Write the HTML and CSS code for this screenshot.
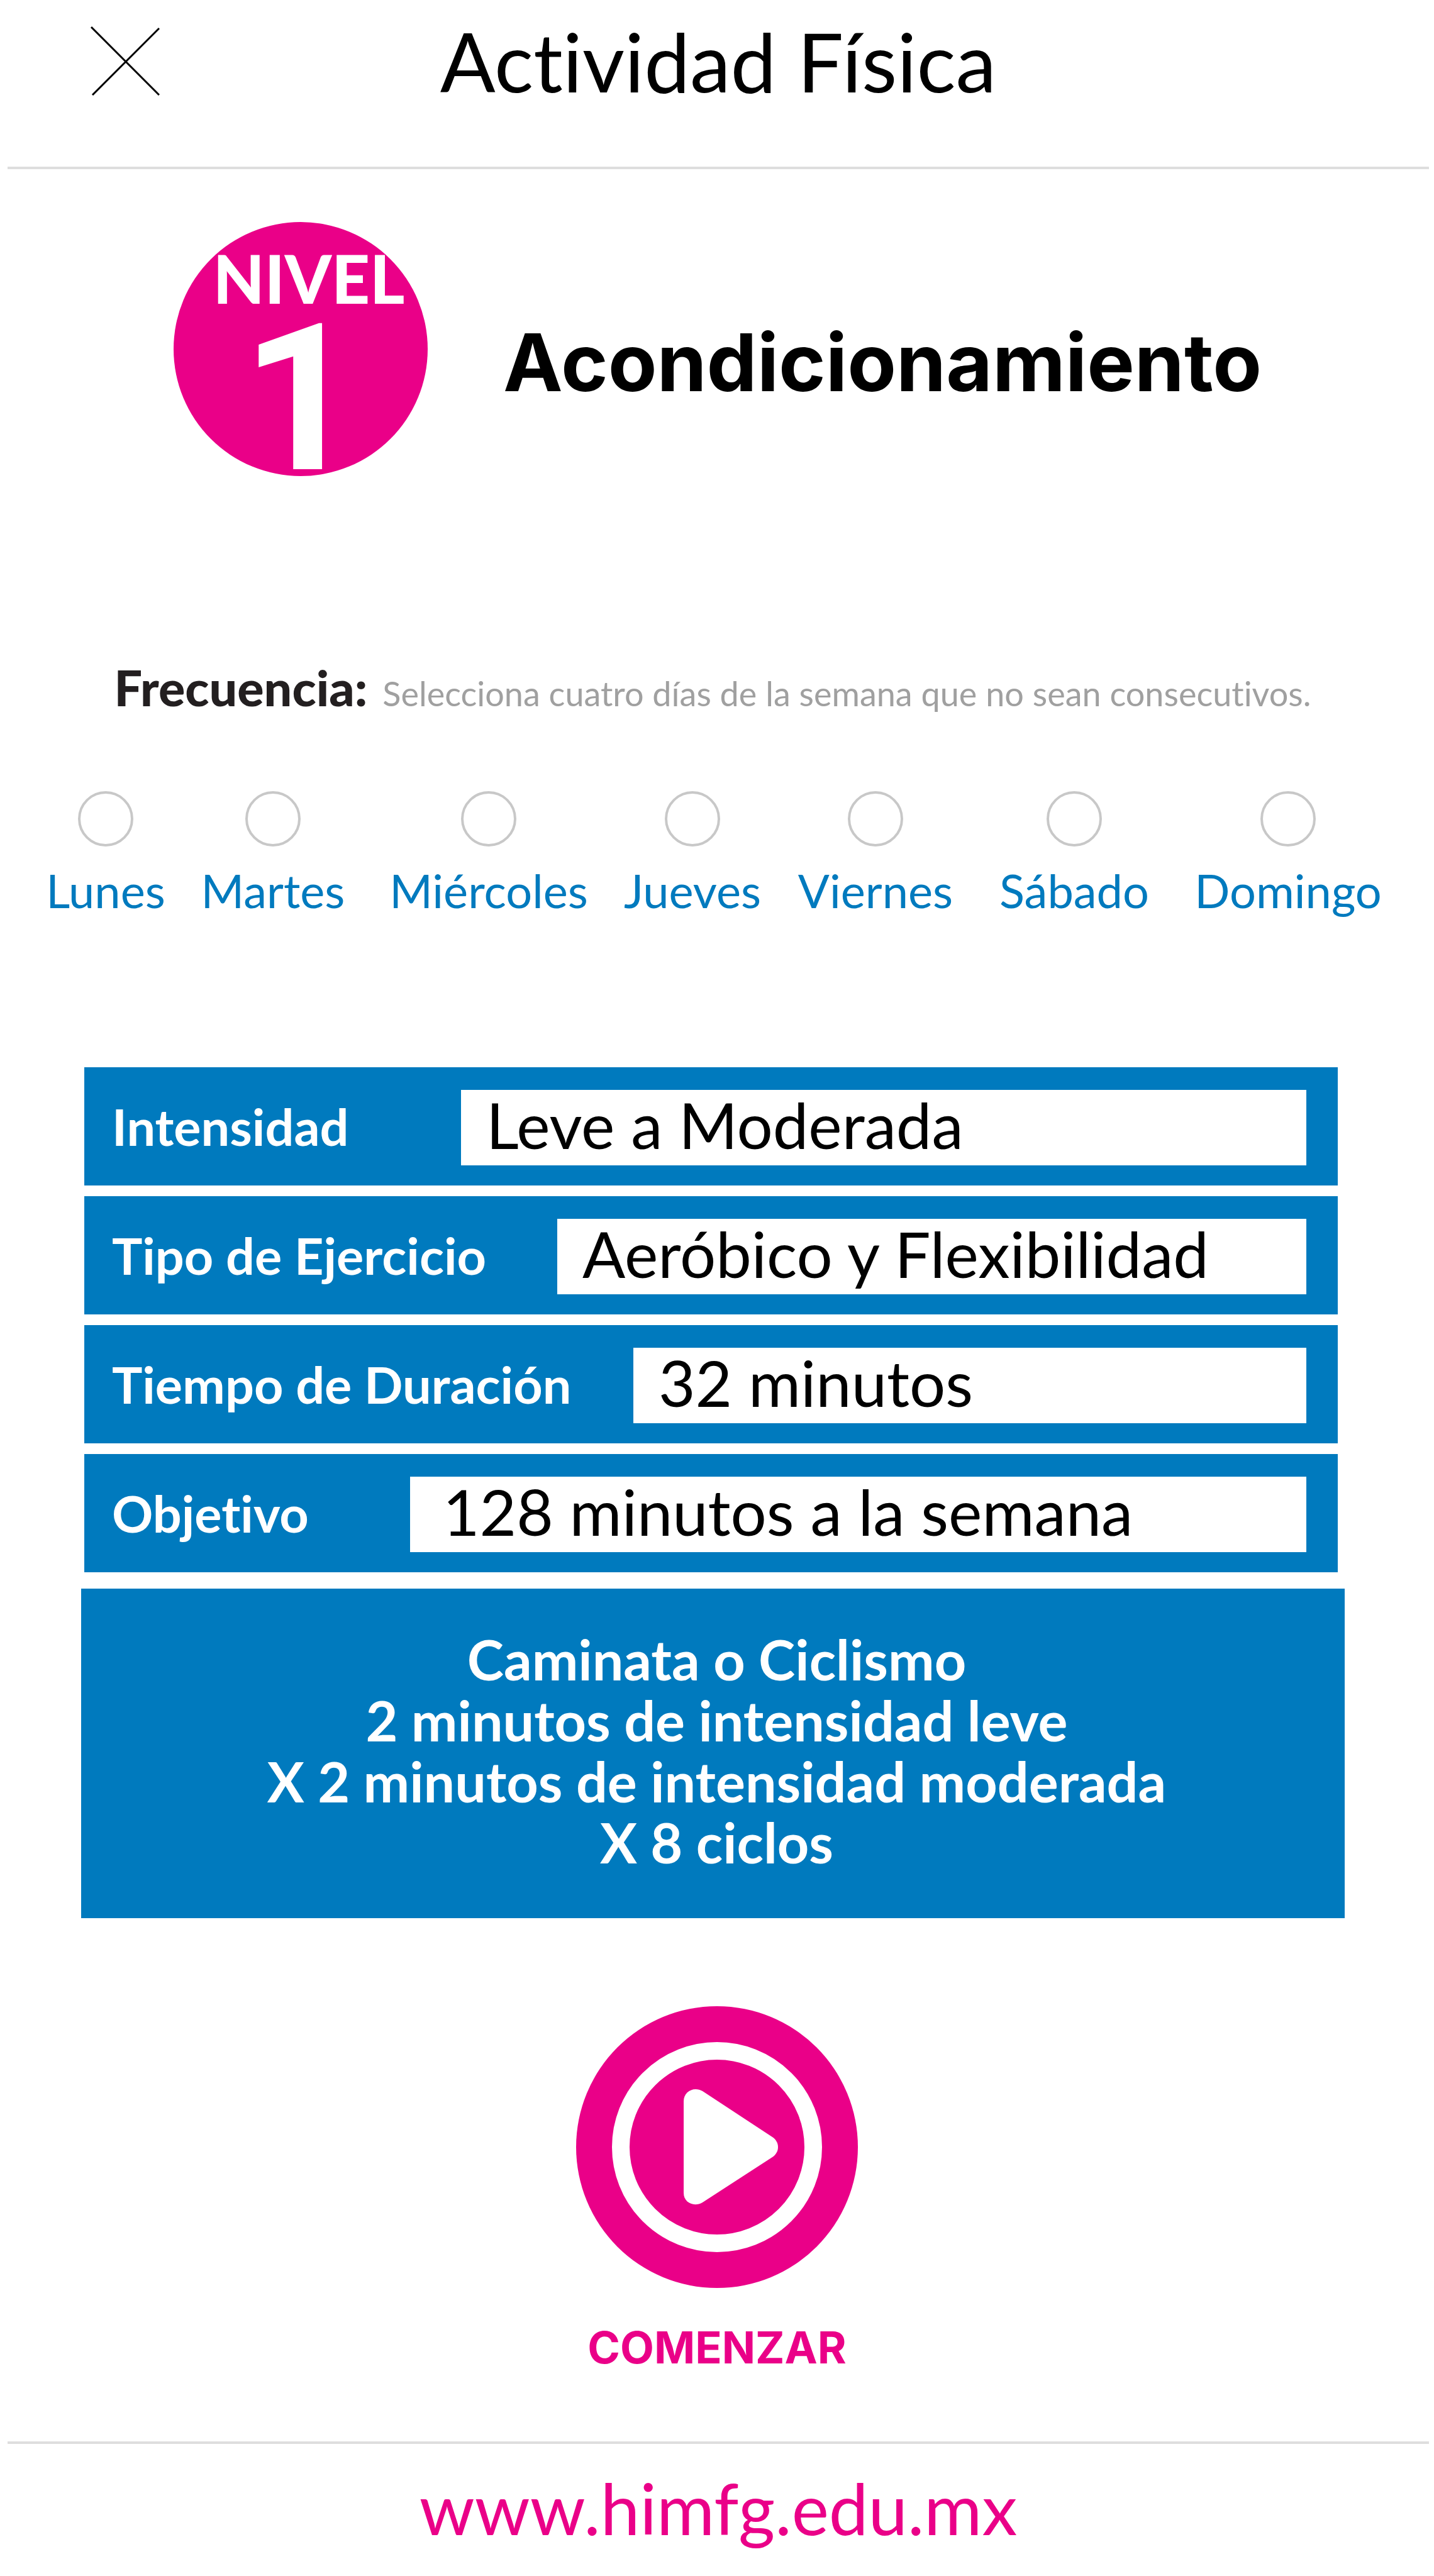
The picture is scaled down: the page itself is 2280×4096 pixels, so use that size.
FILE: index.html
```html
<!DOCTYPE html>
<html lang="es">
<head>
  <meta charset="utf-8">
  <meta name="viewport" content="width=device-width, initial-scale=1">
  <title>Actividad Física</title>
  <link rel="stylesheet" href="styles.css">
</head>
<body>
  <header class="topbar">
    <button class="close" type="button" aria-label="Cerrar">
      <svg class="close-icon" viewBox="0 0 110 110" aria-hidden="true">
        <path d="M1 1 L109 109 M109 3 L3 109" fill="none" stroke="#000" stroke-width="3"/>
      </svg>
    </button>
    <h1 class="title">Actividad Física</h1>
  </header>

  <main>
    <section class="level">
      <div class="badge">
        <span class="badge-word">NIVEL</span>
        <span class="badge-number">1</span>
      </div>
      <h2 class="level-name">Acondicionamiento</h2>
    </section>

    <section class="frequency">
      <h3 class="frequency-title">Frecuencia:</h3>
      <p class="frequency-hint">Selecciona cuatro días de la semana que no sean consecutivos.</p>
    </section>

    <div class="days">
      <label class="day"><input class="day-check" type="checkbox">Lunes</label>
      <label class="day"><input class="day-check" type="checkbox">Martes</label>
      <label class="day"><input class="day-check" type="checkbox">Miércoles</label>
      <label class="day"><input class="day-check" type="checkbox">Jueves</label>
      <label class="day"><input class="day-check" type="checkbox">Viernes</label>
      <label class="day"><input class="day-check" type="checkbox">Sábado</label>
      <label class="day"><input class="day-check" type="checkbox">Domingo</label>
    </div>

    <div class="fields">
      <div class="field field-intensity">
        <label class="field-label" for="intensidad">Intensidad</label>
        <input class="field-value" id="intensidad" type="text" value="Leve a Moderada">
      </div>
      <div class="field field-type">
        <label class="field-label" for="tipo">Tipo de Ejercicio</label>
        <input class="field-value" id="tipo" type="text" value="Aeróbico y Flexibilidad">
      </div>
      <div class="field field-time">
        <label class="field-label" for="tiempo">Tiempo de Duración</label>
        <input class="field-value" id="tiempo" type="text" value="32 minutos">
      </div>
      <div class="field field-goal">
        <label class="field-label" for="objetivo">Objetivo</label>
        <input class="field-value" id="objetivo" type="text" value="128 minutos a la semana">
      </div>
    </div>

    <p class="routine">
      Caminata o Ciclismo<br>
      2 minutos de intensidad leve<br>
      X 2 minutos de intensidad moderada<br>
      X 8 ciclos
    </p>

    <button class="start" type="button">
      <svg class="start-icon" viewBox="0 0 448 448" aria-hidden="true">
        <circle cx="224" cy="224" r="224" fill="#ea0088"/>
        <circle cx="224" cy="224" r="153" fill="none" stroke="#fff" stroke-width="28"/>
        <path d="M171 151 C171 136 187 127 201 135 L312 208 C324 216 324 232 312 240 L201 312 C187 320 171 312 171 297 Z" fill="#fff"/>
      </svg>
      COMENZAR
    </button>
  </main>

  <footer class="footer">
    <a class="site" href="http://www.himfg.edu.mx">www.himfg.edu.mx</a>
  </footer>
</body>
</html>
```
FILE: styles.css
```css
:root {
  --blue: #007abe;
  --pink: #ea0088;
  --rule: #dedede;
}

* {
  box-sizing: border-box;
}

body {
  margin: 0;
  background: #fff;
  color: #000;
  font-family: Lato, "Open Sans", sans-serif;
  font-variant-ligatures: none;
}

h1, h2, h3, p {
  margin: 0;
}

button {
  padding: 0;
  border: 0;
  background: none;
  cursor: pointer;
}

/* Top bar */
.topbar {
  display: grid;
  grid-template-columns: 1fr auto 1fr;
  margin: 0 8px 0 12px;
  padding: 20px 132px 91px;
  border-bottom: 4px solid var(--rule);
}

.close {
  justify-self: start;
  align-self: center;
  height: 110px;
}

.close-icon {
  display: block;
  width: 110px;
  height: 110px;
}

.title {
  font-size: 130px;
  font-weight: 400;
  line-height: 154px;
}

/* Level */
.level {
  display: flex;
  align-items: center;
  gap: 120px;
  padding: 84px 0 0 276px;
}

.badge {
  display: flex;
  flex: none;
  flex-direction: column;
  align-items: center;
  gap: 33px;
  width: 404px;
  height: 404px;
  padding-top: 49px;
  border-radius: 50%;
  background: var(--pink);
  color: #fff;
}

.badge-word {
  padding-left: 26px;
  font-size: 106px;
  font-weight: 900;
  line-height: 80px;
}

.badge-number {
  font-family: Roboto, sans-serif;
  font-size: 326px;
  font-weight: 700;
  line-height: 240px;
}

.level-name {
  padding-top: 42px;
  font-family: Inter, sans-serif;
  font-size: 127px;
  font-weight: 700;
  line-height: 148px;
}

/* Frequency */
.frequency {
  display: flex;
  align-items: baseline;
  justify-content: center;
  gap: 24px;
  margin-top: 291px;
  padding-right: 14px;
}

.frequency-title {
  color: #231f20;
  font-size: 79px;
  font-weight: 900;
  line-height: 90px;
}

.frequency-hint {
  color: #a0a0a0;
  font-size: 54px;
  font-weight: 400;
  line-height: 70px;
}

.days {
  display: grid;
  grid-template-columns:
    minmax(0, 172fr) minmax(0, 234fr) minmax(0, 326fr) minmax(0, 196fr)
    minmax(0, 260fr) minmax(0, 246fr) minmax(0, 308fr);
  gap: 63px;
  margin-top: 120px;
  padding: 0 78px 0 82px;
}

.day {
  display: flex;
  flex-direction: column;
  align-items: center;
  gap: 26px;
  color: var(--blue);
  font-size: 74px;
  line-height: 88px;
}

.day-check {
  appearance: none;
  width: 88px;
  height: 88px;
  margin: 0;
  border: 4px solid #c8c8c8;
  border-radius: 50%;
}

.day-check:checked {
  background: var(--blue);
}

/* Exercise details */
.fields {
  display: grid;
  grid-template-columns: minmax(0, 1fr);
  gap: 17px;
  margin: 237px 153px 0 134px;
}

.field {
  display: flex;
  align-items: center;
  padding: 36px 50px 32px 44px;
  background: var(--blue);
}

.field-label {
  flex: none;
  padding-bottom: 4px;
  color: #fff;
  font-size: 81px;
  font-weight: 700;
  line-height: 116px;
}

.field-value {
  flex: 1;
  min-width: 0;
  height: 120px;
  padding: 0 40px 10px;
  border: 0;
  border-radius: 0;
  background: #fff;
  color: #000;
  font-family: inherit;
  font-size: 101px;
  font-variant-ligatures: none;
  line-height: 110px;
}

.field-intensity .field-label {
  width: 555px;
}

.field-type .field-label {
  width: 708px;
}

.field-time .field-label {
  width: 829px;
}

.field-goal .field-label {
  width: 474px;
}

.field-goal .field-value {
  padding-left: 52px;
}

.routine {
  margin: 26px 142px 0 129px;
  padding: 64px 0 72px 12px;
  background: var(--blue);
  color: #fff;
  font-size: 88px;
  font-weight: 700;
  line-height: 97px;
  text-align: center;
}

/* Start button */
.start {
  display: flex;
  flex-direction: column;
  align-items: center;
  gap: 55px;
  margin: 140px auto 109px;
  color: var(--pink);
  font-family: Inter, sans-serif;
  font-size: 70px;
  font-weight: 700;
  line-height: 80px;
}

.start-icon {
  display: block;
  width: 448px;
  height: 448px;
}

/* Footer */
.footer {
  margin: 0 8px 0 12px;
  padding: 27px 0 33px;
  border-top: 4px solid var(--rule);
  text-align: center;
}

.site {
  display: block;
  color: var(--pink);
  font-size: 112px;
  line-height: 150px;
  text-decoration: none;
}
```
